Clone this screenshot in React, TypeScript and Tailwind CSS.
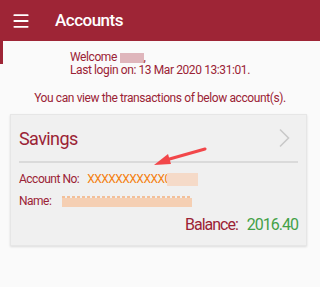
import { Menu } from "lucide-react";

const RED = "#9e2536";

function Arrow() {
  return (
    <svg
      className="absolute left-[141px] top-[31px]"
      width="56"
      height="22"
      viewBox="0 0 56 22"
      fill="none"
    >
      <path d="M53 3 L14 14" stroke="#f2474a" strokeWidth="3" strokeLinecap="round" />
      <path d="M2 19 L16 8 L19 18 Z" fill="#f2474a" />
    </svg>
  );
}

export default function App() {
  return (
    <div className="w-[320px] h-[287px] overflow-hidden bg-[#fafafa] font-['Roboto',sans-serif]">
      <header className="h-[41px] flex items-center" style={{ backgroundColor: RED }}>
        <Menu className="ml-[11px] text-white" size={20} strokeWidth={2.2} />
        <h1 className="ml-[24px] text-[17px] font-medium tracking-[-0.5px] text-white">
          Accounts
        </h1>
      </header>

      <div className="flex items-start">
        <div className="w-[3px] h-[23px] shrink-0 bg-[#9e2536]" />
        <div className="flex-1">
          <div className="pl-[67px] pt-[10px] text-[12px] leading-[13px] tracking-[-0.4px] text-[#9b2335]">
            <div className="flex items-center">
              <span>Welcome&nbsp;</span>
              <span className="inline-block w-[24px] h-[10px] bg-[#dfb6bc]" />
              <span>,</span>
            </div>
            <div>Last login on: 13 Mar 2020 13:31:01.</div>
          </div>

          <p className="mt-[14px] pr-[3px] text-center text-[12px] leading-[14px] tracking-[-0.4px] text-[#9b2335]">
            You can view the transactions of below account(s).
          </p>

          <div className="relative mt-[9px] ml-[7px] w-[297px] h-[132px] bg-[#f0f0f0] border border-[#e6e6e6] shadow-[0_1px_2px_rgba(0,0,0,0.12)] px-[8px]">
            <div className="flex items-center justify-between h-[44px] pt-[2px]">
              <span className="text-[18px] tracking-[-0.6px] text-[#9b2335]">Savings</span>
              <svg width="12" height="20" viewBox="0 0 12 20" className="mr-[8px]" fill="none">
                <path d="M2 1.5 L10.5 10 L2 18.5" stroke="#c9c9c9" strokeWidth="1.6" />
              </svg>
            </div>
            <div className="h-[2px] bg-[#dadada] mt-[2px]" />

            <div className="mt-[9px] flex items-center text-[12px] leading-[14px] tracking-[-0.5px]">
              <span className="text-[#9b2335]">Account No:</span>
              <span className="ml-[8px] text-[#f5800f]">XXXXXXXXXXX0</span>
              <span className="ml-[-4px] inline-block w-[31px] h-[13px] bg-[#f5dac8]" />
            </div>

            <div className="mt-[8px] flex items-center text-[12px] leading-[14px] tracking-[-0.5px]">
              <span className="text-[#9b2335]">Name:</span>
              <span className="relative ml-[11px] inline-block w-[130px] h-[14px]">
                <span className="absolute left-0 top-[2px] w-[130px] h-[3px] bg-[repeating-linear-gradient(90deg,#f5a060_0_3px,transparent_3px_5px)] opacity-60" />
                <span className="absolute left-0 top-[4px] w-[130px] h-[9px] bg-[#f5cfb3]" />
              </span>
            </div>

            <div className="mt-[7px] flex justify-end items-baseline text-[16px] leading-[20px] tracking-[-1px]">
              <span className="text-[#9b2335]">Balance:</span>
              <span className="ml-[9px] text-[#43a047]">2016.40</span>
            </div>

            <Arrow />
          </div>
        </div>
      </div>
    </div>
  );
}
